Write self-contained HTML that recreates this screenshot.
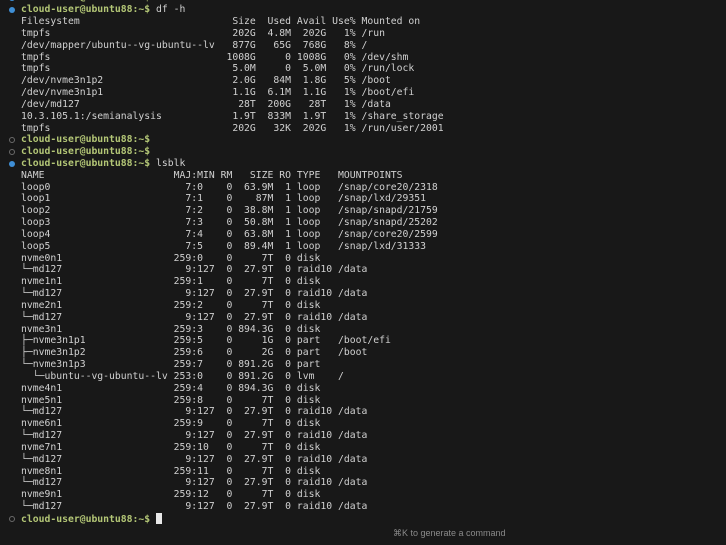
<!DOCTYPE html>
<html><head><meta charset="utf-8"><style>
html,body{margin:0;padding:0;background:#181818;width:726px;height:545px;overflow:hidden;position:relative}
pre{position:absolute;left:21px;top:-7.6px;margin:0;font-family:"DejaVu Sans Mono","Liberation Mono",monospace;font-size:9.75px;line-height:11.83px;color:#d0d0d0;white-space:pre}
.p{color:#b3c676;font-weight:bold}
.d{position:absolute;left:9px;width:6px;height:6px;border-radius:50%;box-sizing:border-box}
.b{background:#3f8fd6}
.h{border:1px solid #6a6a6a}
.cur{display:inline-block;width:6px;height:11px;background:#e8e8e8;vertical-align:-2px}
.hint{position:absolute;left:393px;top:528px;font-family:"Liberation Sans",sans-serif;font-size:9px;color:#8a8a8a}
</style></head><body>
<div class="d b" style="top:-5px"></div>
<div class="d b" style="top:7px"></div>
<div class="d h" style="top:137px"></div>
<div class="d h" style="top:149px"></div>
<div class="d b" style="top:161px"></div>
<div class="d h" style="top:516px"></div>
<pre><span class="p">cloud-user@ubuntu88:~$</span>
<span class="p">cloud-user@ubuntu88:~$</span> df -h
Filesystem                          Size  Used Avail Use% Mounted on
tmpfs                               202G  4.8M  202G   1% /run
/dev/mapper/ubuntu--vg-ubuntu--lv   877G   65G  768G   8% /
tmpfs                              1008G     0 1008G   0% /dev/shm
tmpfs                               5.0M     0  5.0M   0% /run/lock
/dev/nvme3n1p2                      2.0G   84M  1.8G   5% /boot
/dev/nvme3n1p1                      1.1G  6.1M  1.1G   1% /boot/efi
/dev/md127                           28T  200G   28T   1% /data
10.3.105.1:/semianalysis            1.9T  833M  1.9T   1% /share_storage
tmpfs                               202G   32K  202G   1% /run/user/2001
<span class="p">cloud-user@ubuntu88:~$</span>
<span class="p">cloud-user@ubuntu88:~$</span>
<span class="p">cloud-user@ubuntu88:~$</span> lsblk
NAME                      MAJ:MIN RM   SIZE RO TYPE   MOUNTPOINTS
loop0                       7:0    0  63.9M  1 loop   /snap/core20/2318
loop1                       7:1    0    87M  1 loop   /snap/lxd/29351
loop2                       7:2    0  38.8M  1 loop   /snap/snapd/21759
loop3                       7:3    0  50.8M  1 loop   /snap/snapd/25202
loop4                       7:4    0  63.8M  1 loop   /snap/core20/2599
loop5                       7:5    0  89.4M  1 loop   /snap/lxd/31333
nvme0n1                   259:0    0     7T  0 disk
└─md127                     9:127  0  27.9T  0 raid10 /data
nvme1n1                   259:1    0     7T  0 disk
└─md127                     9:127  0  27.9T  0 raid10 /data
nvme2n1                   259:2    0     7T  0 disk
└─md127                     9:127  0  27.9T  0 raid10 /data
nvme3n1                   259:3    0 894.3G  0 disk
├─nvme3n1p1               259:5    0     1G  0 part   /boot/efi
├─nvme3n1p2               259:6    0     2G  0 part   /boot
└─nvme3n1p3               259:7    0 891.2G  0 part
  └─ubuntu--vg-ubuntu--lv 253:0    0 891.2G  0 lvm    /
nvme4n1                   259:4    0 894.3G  0 disk
nvme5n1                   259:8    0     7T  0 disk
└─md127                     9:127  0  27.9T  0 raid10 /data
nvme6n1                   259:9    0     7T  0 disk
└─md127                     9:127  0  27.9T  0 raid10 /data
nvme7n1                   259:10   0     7T  0 disk
└─md127                     9:127  0  27.9T  0 raid10 /data
nvme8n1                   259:11   0     7T  0 disk
└─md127                     9:127  0  27.9T  0 raid10 /data
nvme9n1                   259:12   0     7T  0 disk
└─md127                     9:127  0  27.9T  0 raid10 /data
<span class="p">cloud-user@ubuntu88:~$</span> <span class="cur"></span></pre>
<div class="hint">⌘K to generate a command</div>
</body></html>
